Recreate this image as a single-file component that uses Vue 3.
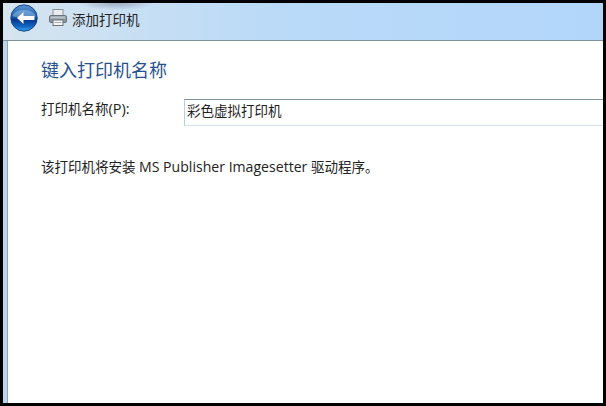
<script setup>
const title = '添加打印机'
</script>

<template>
  <div class="frame">
    <div class="window">
      <header class="bar">
        <svg class="back" width="28" height="28" viewBox="0 0 28 28">
          <defs>
            <linearGradient id="orb" x1="0" y1="0" x2="0" y2="1">
              <stop offset="0" stop-color="#5b97d6" />
              <stop offset="0.46" stop-color="#1c5cab" />
              <stop offset="0.56" stop-color="#08378c" />
              <stop offset="0.8" stop-color="#0f63bf" />
              <stop offset="1" stop-color="#35a6ee" />
            </linearGradient>
          </defs>
          <circle cx="14" cy="14" r="13.2" fill="url(#orb)" stroke="#1b4684" stroke-width="1" />
          <path d="M2.5 12C5 4 23 4 25.500 12C19 14.500 9 14.500 2.500 12Z" fill="#a6cbee" opacity="0.45" />
          <path d="M13.500 8L7 14l6.500 6v-4h11v-4h-11Z" fill="#fff" />
        </svg>
        <svg class="printer" width="20" height="20" viewBox="0 0 20 20">
          <rect x="5" y="1.500" width="10" height="6.500" fill="#e9ebed" stroke="#8a9299" />
          <rect x="1.500" y="7.500" width="17" height="7" rx="1.500" fill="#8d969d" stroke="#6c747b" />
          <rect x="2.500" y="8.500" width="15" height="2" fill="#bcc3c9" />
          <rect x="5" y="12" width="10" height="5.500" fill="#f4f5f6" stroke="#6c747b" />
          <path d="M6.500 14.500h7" stroke="#a8aeb4" />
        </svg>
        <span class="bar-title">{{ title }}</span>
      </header>
      <div class="middle">
        <div class="strip"></div>
        <main class="content">
          <h1 class="heading">键入打印机名称</h1>
          <div class="field">
            <label class="label">打印机名称<span class="latin-label">(P):</span></label>
            <div class="input">彩色虚拟打印机</div>
          </div>
          <p class="note">该打印机将安装 <span class="latin">MS Publisher Imagesetter</span> 驱动程序。</p>
        </main>
      </div>
    </div>
  </div>
</template>

<style>
html, body { margin: 0; background: #000; }
</style>

<style scoped>
.frame {
  box-sizing: border-box;
  width: 606px;
  height: 406px;
  padding: 3px;
  background: #000;
  font-family: "Open Sans", "Noto Sans CJK SC", sans-serif;
}
.window {
  display: flex;
  flex-direction: column;
  height: 100%;
  background: #fff;
  overflow: hidden;
}
.bar {
  box-sizing: border-box;
  flex: none;
  display: flex;
  align-items: center;
  height: 38px;
  padding: 0 0 7px 7px;
  background:
    radial-gradient(ellipse 38px 7px at 113px 0, rgba(95, 105, 125, 0.45), rgba(95, 105, 125, 0) 100%),
    linear-gradient(90deg, #d6e5ef 0, #c8dff3 22%, #badaf8 45%, #b2d6fa 100%);
  border-bottom: 1px solid #7f8f9c;
}
.back { flex: none; }
.printer { margin-left: 10px; flex: none; }
.bar-title {
  margin-left: 4px;
  padding-top: 2px;
  font-size: 13.5px;
  color: #222;
}
.middle {
  flex: 1;
  display: flex;
  min-height: 0;
}
.strip {
  flex: none;
  width: 4px;
  background: #bcd6ee;
  border-right: 1px solid #93a6b6;
}
.content {
  flex: 1;
  min-width: 0;
  padding: 16px 0 0 33px;
  background: #fff;
}
.heading {
  margin: 0;
  font-size: 18px;
  font-weight: 400;
  line-height: 26px;
  color: #24528f;
}
.field {
  display: flex;
  align-items: flex-start;
  margin-top: 16px;
}
.label {
  flex: none;
  width: 143px;
  font-size: 13.5px;
  line-height: 20px;
  color: #222;
}
.latin-label { font-size: 14.5px; }
.input {
  box-sizing: border-box;
  flex: 1;
  height: 27px;
  padding-left: 2px;
  font-size: 13.5px;
  line-height: 22px;
  color: #222;
  border: 1px solid #b5cfe3;
  border-top-color: #7f929f;
  border-right: none;
  border-bottom-color: #d5e3ec;
}
.note {
  margin: 31px 0 0;
  font-size: 13.5px;
  line-height: 20px;
  color: #222;
}
.latin { font-size: 14.1px; }
</style>
